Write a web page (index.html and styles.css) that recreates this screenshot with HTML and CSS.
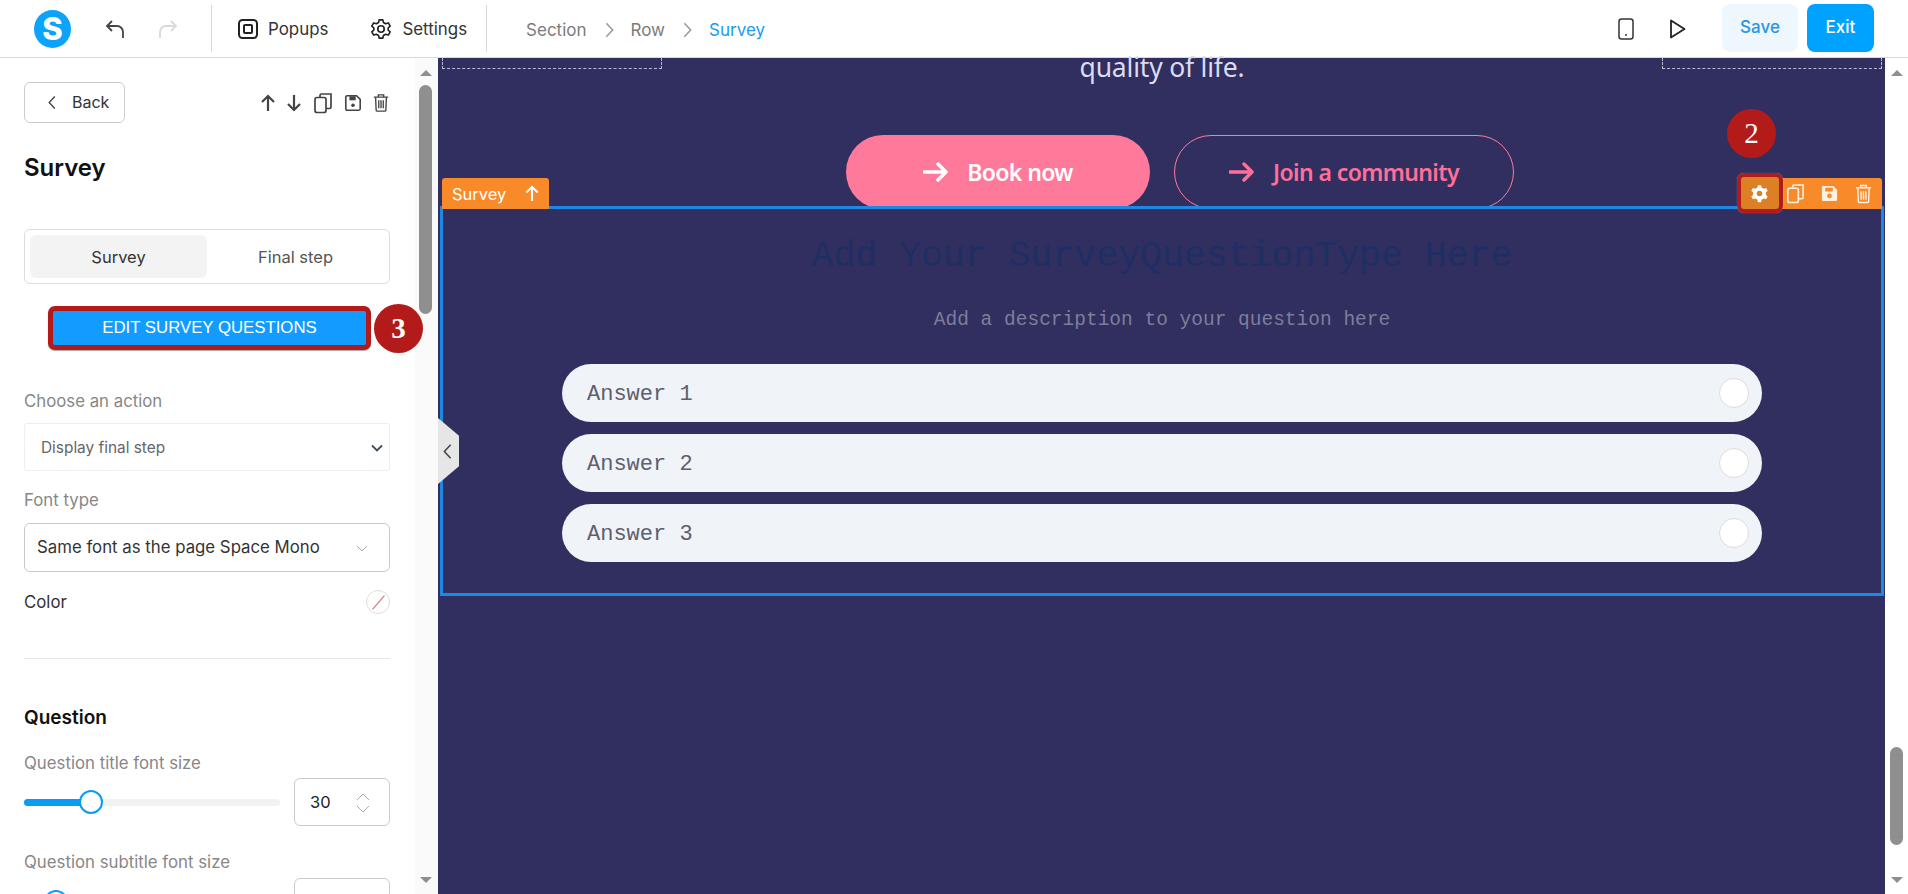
FILE: index.html
```html
<!DOCTYPE html>
<html lang="en">
<head>
<meta charset="utf-8">
<title>Survey editor</title>
<link rel="stylesheet" href="styles.css">
</head>
<body>
<svg class="defs" width="0" height="0" aria-hidden="true">
  <symbol id="i-copy" viewBox="0 0 20 22"><path d="M7 5V3.500A1.500 1.500 0 0 1 8.500 2H18v13a1.500 1.500 0 0 1-1.500 1.500H13" fill="none" stroke="currentColor" stroke-width="1.700"/><rect x="2" y="5.500" width="11" height="15" rx="2" fill="none" stroke="currentColor" stroke-width="1.700"/></symbol>
  <symbol id="i-save" viewBox="0 0 20 20"><path d="M3.500 2H14l4 4v10.500a1.500 1.500 0 0 1-1.500 1.500h-13A1.500 1.500 0 0 1 2 16.500v-13A1.500 1.500 0 0 1 3.500 2Z" fill="none" stroke="currentColor" stroke-width="1.800"/><path d="M6 2.500h7v4.500H6z" fill="currentColor"/><circle cx="10" cy="12.500" r="2" fill="currentColor"/></symbol>
  <symbol id="i-save-solid" viewBox="0 0 20 20"><path fill-rule="evenodd" d="M3.500 2H14l4 4v10.500a1.500 1.500 0 0 1-1.500 1.500h-13A1.500 1.500 0 0 1 2 16.500v-13A1.500 1.500 0 0 1 3.500 2ZM5.500 4v4h8V4ZM10 10a2.500 2.500 0 1 0 0 5 2.500 2.500 0 0 0 0-5Z" fill="currentColor"/></symbol>
  <symbol id="i-trash" viewBox="0 0 20 22"><path d="M2 5h16M7 5V2.500h6V5M4 5l.6 14.500a1 1 0 0 0 1 1h8.800a1 1 0 0 0 1-1L16 5M7.500 8.500v9M10 8.500v9M12.500 8.500v9" fill="none" stroke="currentColor" stroke-width="1.500"/></symbol>
  <symbol id="i-up" viewBox="0 0 16 18"><path d="M8 17V2M2 8l6-6 6 6" fill="none" stroke="currentColor" stroke-width="2.200"/></symbol>
  <symbol id="i-down" viewBox="0 0 16 18"><path d="M8 1v15M2 10l6 6 6-6" fill="none" stroke="currentColor" stroke-width="2.200"/></symbol>
  <symbol id="i-right" viewBox="0 0 26 20"><path d="M1 10h22M15 2l8 8-8 8" fill="none" stroke="currentColor" stroke-width="3.500" stroke-linecap="round" stroke-linejoin="round"/></symbol>
  <symbol id="i-chev" viewBox="0 0 10 18"><path d="M1.500 1.500 8.500 9l-7 7.500" fill="none" stroke="currentColor" stroke-width="1.700"/></symbol>
  <symbol id="i-gear" viewBox="0 0 24 24"><path fill="none" stroke="currentColor" stroke-width="1.800" stroke-linejoin="round" d="M10 2h4l.7 3 2.300 1.300 3-.9 2 3.400-2.200 2.100v2.200l2.200 2.100-2 3.400-3-.9-2.300 1.300-.7 3h-4l-.7-3L7 17.700l-3 .9-2-3.400 2.200-2.100v-2.200L2 8.800l2-3.400 3 .9L9.300 5Z"/><circle cx="12" cy="12" r="3.500" fill="none" stroke="currentColor" stroke-width="1.800"/></symbol>
</svg>

<div class="app">
  <header class="topbar">
    <div class="logo">S</div>
    <svg class="ic undo" viewBox="0 0 20 20"><path d="M7 2 2 7l5 5M2 7h10a6 6 0 0 1 6 6v6" fill="none" stroke="currentColor" stroke-width="1.800"/></svg>
    <svg class="ic redo" viewBox="0 0 20 20"><path d="m13 2 5 5-5 5M18 7H8a6 6 0 0 0-6 6v6" fill="none" stroke="currentColor" stroke-width="1.800"/></svg>
    <span class="vr first"></span>
    <svg class="ic popups" viewBox="0 0 20 20"><rect x="1" y="1" width="18" height="18" rx="3.500" fill="none" stroke="currentColor" stroke-width="2"/><rect x="6" y="6" width="8" height="8" rx="1" fill="none" stroke="currentColor" stroke-width="2"/></svg>
    <span class="tool-label">Popups</span>
    <svg class="ic settings"><use href="#i-gear"/></svg>
    <span class="tool-label">Settings</span>
    <span class="vr second"></span>
    <nav class="crumbs">
      <span>Section</span>
      <svg class="crumb-chev"><use href="#i-chev"/></svg>
      <span>Row</span>
      <svg class="crumb-chev"><use href="#i-chev"/></svg>
      <span class="crumb-on">Survey</span>
    </nav>
    <div class="top-right">
      <svg class="ic mobile" viewBox="0 0 16 22"><rect x="1" y="1" width="14" height="20" rx="2.500" fill="none" stroke="currentColor" stroke-width="1.500"/><circle cx="8" cy="17" r="1" fill="currentColor"/></svg>
      <svg class="ic play" viewBox="0 0 17 20"><path d="M2 1.500 15.500 10 2 18.500Z" fill="none" stroke="currentColor" stroke-width="1.800" stroke-linejoin="round"/></svg>
      <button class="btn btn-save">Save</button>
      <button class="btn btn-exit">Exit</button>
    </div>
  </header>

  <div class="workspace">
    <aside class="sidebar">
      <div class="panel">
        <div class="panel-head">
          <button class="back"><svg class="back-chev"><use href="#i-chev"/></svg>Back</button>
          <div class="panel-actions">
            <svg class="pa up"><use href="#i-up"/></svg>
            <svg class="pa down"><use href="#i-down"/></svg>
            <svg class="pa copy"><use href="#i-copy"/></svg>
            <svg class="pa save"><use href="#i-save"/></svg>
            <svg class="pa trash"><use href="#i-trash"/></svg>
          </div>
        </div>
        <h1 class="panel-title">Survey</h1>
        <div class="tabs">
          <span class="tab tab-on">Survey</span>
          <span class="tab">Final step</span>
        </div>
        <div class="edit-row">
          <button class="edit-btn">EDIT SURVEY QUESTIONS</button>
          <span class="step step-3">3</span>
        </div>
        <label class="field-label action-label">Choose an action</label>
        <div class="native-select">Display final step
          <svg class="sel-chev" viewBox="0 0 12 8"><path d="m1 1.500 5 5 5-5" fill="none" stroke="currentColor" stroke-width="1.800"/></svg>
        </div>
        <label class="field-label font-label">Font type</label>
        <div class="font-select">Same font as the page Space Mono
          <svg class="font-chev" viewBox="0 0 12 8"><path d="m1 1 5 5 5-5" fill="none" stroke="currentColor" stroke-width="1"/></svg>
        </div>
        <div class="color-row">
          <span>Color</span>
          <span class="swatch"><svg viewBox="0 0 24 24"><path d="M6 20 19 5" stroke="#d9808a" stroke-width="1.500"/></svg></span>
        </div>
        <hr class="rule">
        <h2 class="section-title">Question</h2>
        <label class="field-label title-size">Question title font size</label>
        <div class="slider-row">
          <div class="track"><span class="fill fill-a"></span><span class="knob"></span></div>
          <div class="num">30
            <svg class="spin" viewBox="0 0 14 20"><path d="m1 7 6-6 6 6M1 13l6 6 6-6" fill="none" stroke="currentColor" stroke-width="1"/></svg>
          </div>
        </div>
        <label class="field-label sub-size">Question subtitle font size</label>
        <div class="slider-row second-row">
          <div class="track"><span class="fill fill-b"></span><span class="knob"></span></div>
          <div class="num">
            <svg class="spin" viewBox="0 0 14 20"><path d="m1 7 6-6 6 6M1 13l6 6 6-6" fill="none" stroke="currentColor" stroke-width="1"/></svg>
          </div>
        </div>
      </div>
      <div class="side-scroll">
        <span class="arrow-up"></span>
        <span class="side-thumb"></span>
        <span class="arrow-down"></span>
      </div>
    </aside>

    <main class="canvas">
      <div class="collapse"><svg class="collapse-chev"><use href="#i-chev"/></svg></div>
      <div class="hero">
        <span class="dashed dashed-l"></span>
        <p class="hero-text">quality of life.</p>
        <span class="dashed dashed-r"></span>
      </div>
      <div class="cta-row">
        <a class="cta cta-solid"><svg class="cta-arrow"><use href="#i-right"/></svg>Book now</a>
        <a class="cta cta-line"><svg class="cta-arrow"><use href="#i-right"/></svg>Join a community</a>
      </div>
      <section class="survey">
        <div class="tag">Survey <svg class="tag-up"><use href="#i-up"/></svg></div>
        <div class="toolbar">
          <span class="tool tool-on"><svg class="tool-gear" viewBox="0 0 24 24"><path fill="currentColor" fill-rule="evenodd" d="M10 1.500h4l.7 3 2.600 1.500 3-.9 2 3.500-2.200 2.100v3l2.200 2.100-2 3.500-3-.9-2.600 1.500-.7 3h-4l-.7-3-2.600-1.500-3 .9-2-3.500 2.200-2.100v-3L1.700 8.600l2-3.500 3 .9L9.300 4.500ZM12 8.500a3.500 3.500 0 1 0 0 7 3.500 3.500 0 0 0 0-7Z"/></svg></span>
          <svg class="tool-ic"><use href="#i-copy"/></svg>
          <svg class="tool-ic"><use href="#i-save-solid"/></svg>
          <svg class="tool-ic"><use href="#i-trash"/></svg>
        </div>
        <span class="step step-2">2</span>
        <h2 class="q-title">Add Your SurveyQuestionType Here</h2>
        <p class="q-desc">Add a description to your question here</p>
        <ul class="answers">
          <li class="answer"><span class="answer-text">Answer 1</span><span class="radio"></span></li>
          <li class="answer"><span class="answer-text">Answer 2</span><span class="radio"></span></li>
          <li class="answer"><span class="answer-text">Answer 3</span><span class="radio"></span></li>
        </ul>
      </section>
    </main>

    <div class="page-scroll">
      <span class="arrow-up"></span>
      <span class="page-thumb"></span>
      <span class="arrow-down"></span>
    </div>
  </div>
</div>
</body>
</html>
```

FILE: styles.css
```css
* { box-sizing: border-box; }
html, body { margin: 0; height: 100%; overflow: hidden; }
body { font-family: Inter, "Liberation Sans", sans-serif; color: #333; background: #fff; }
.defs { position: absolute; }
.app { display: flex; flex-direction: column; height: 894px; width: 1908px; overflow: hidden; }

/* top bar */
.topbar { height: 58px; flex: none; display: flex; align-items: center; border-bottom: 1px solid #d9d9d9; background: #fff; }
.logo { width: 37px; height: 38px; margin-left: 34px; border-radius: 50%; background: #0ca3fb; color: #fff; font-weight: 800; font-size: 31px; line-height: 38px; text-align: center; }
.ic { display: block; flex: none; color: #333; }
.undo { width: 20px; height: 20px; margin-left: 34px; color: #444; }
.redo { width: 20px; height: 20px; margin-left: 33px; color: #d9d9d9; }
.vr { width: 1px; height: 47px; background: #d8d8d8; flex: none; }
.vr.first { margin-left: 33px; }
.vr.second { margin-left: 19px; }
.popups { width: 20px; height: 20px; margin-left: 26px; color: #222; }
.settings { width: 22px; height: 24px; margin-left: 42px; color: #222; }
.tool-label { font-size: 16.900px; margin-left: 10px; color: #333; }
.crumbs { display: flex; align-items: center; margin-left: 39px; margin-top: 2px; font-size: 17px; color: #7b7b7b; }
.crumb-chev { width: 9px; height: 18px; margin: 0 17px 0 18px; color: #9a9a9a; }
.crumb-on { color: #1a9bf0; }
.top-right { margin-left: auto; display: flex; align-items: center; padding-right: 34px; }
.mobile { width: 16px; height: 22px; margin-right: 35px; color: #333; }
.play { width: 17px; height: 20px; margin-right: 36px; color: #222; }
.btn { border: 0; border-radius: 8px; font: 500 17px Inter, sans-serif; height: 48px; padding: 0 0 3px; margin-top: -1px; }
.btn-save { width: 76px; background: #eef7fe; color: #2b94e6; margin-right: 9px; }
.btn-exit { width: 67px; background: #00a2ff; color: #fff; }

/* workspace */
.workspace { flex: 1; display: flex; min-height: 0; }
.sidebar { width: 438px; flex: none; display: flex; background: #fff; overflow: hidden; }
.panel { width: 415px; padding: 24px 25px 0 24px; flex: none; position: relative; z-index: 2; }

.panel-head { display: flex; justify-content: space-between; align-items: center; height: 41px; }
.back { display: flex; align-items: center; width: 101px; height: 41px; background: #fff; border: 1px solid #ccc; border-radius: 6px; font: 16px Inter, sans-serif; color: #333; padding: 0 0 2px 23px; }
.back-chev { width: 8px; height: 15px; transform: scaleX(-1); margin: 2px 16px 0 0; color: #444; }
.panel-actions { display: flex; align-items: center; color: #444; }
.pa { display: block; }
.pa.up, .pa.down { width: 16px; height: 18px; }
.pa.down { margin-left: 10px; }
.pa.copy { width: 20px; height: 22px; margin-left: 11px; }
.pa.save { width: 18px; height: 18px; margin-left: 11px; }
.pa.trash { width: 18px; height: 21px; margin-left: 10px; }

.panel-title { margin: 28px 0 0; font-size: 24px; line-height: 34px; font-weight: 600; color: #111; }
.tabs { display: flex; margin-top: 44px; height: 55px; padding: 5px; border: 1px solid #ddd; border-radius: 6px; font-size: 16.500px; }
.tab { flex: 1; display: flex; align-items: center; justify-content: center; color: #555; border-radius: 6px; }
.tab-on { background: #f3f3f3; color: #333; flex: 0 0 177px; }

.edit-row { display: flex; align-items: center; margin: 22px 0 0 24px; height: 44px; width: 400px; }
.edit-btn { width: 323px; height: 44px; flex: none; border: 5px solid #b31b1b; border-radius: 7px; background: #139cff; color: #fff; font: 16.800px "Liberation Sans", Arial, sans-serif; box-shadow: 0 1px 1px rgba(0,0,0,.35); padding: 0; }
.step { display: flex; align-items: center; justify-content: center; width: 49px; height: 49px; border-radius: 50%; background: #b31b1b; color: #fff; font-family: "Liberation Serif", serif; font-size: 29px; }
.step-3 { margin-left: 3px; flex: none; font-weight: 700; }
.step-2 { position: absolute; left: 1284px; top: -100px; z-index: 3; }

.field-label { display: block; font-size: 16.800px; line-height: 22px; color: #878787; }
.action-label { margin-top: 40px; }
.native-select { position: relative; height: 48px; margin-top: 11px; padding-left: 16px; line-height: 48px; font-size: 15.400px; color: #666; border: 1px solid #eee; border-radius: 3px; }
.sel-chev { position: absolute; right: 6px; top: 20px; width: 12px; height: 8px; color: #3c4a5c; }
.font-label { margin-top: 18px; }
.font-select { position: relative; height: 49px; margin-top: 12px; padding-left: 12px; line-height: 47px; font-size: 16.800px; color: #333; border: 1px solid #c9c9c9; border-radius: 6px; }
.font-chev { position: absolute; right: 21px; top: 21px; width: 12px; height: 8px; color: #aaa; }
.color-row { display: flex; justify-content: space-between; align-items: center; margin-top: 18px; height: 24px; font-size: 16.800px; color: #333; }
.swatch { display: block; width: 24px; height: 24px; border: 1px solid #ddd; border-radius: 50%; overflow: hidden; }
.swatch svg { display: block; width: 22px; height: 22px; }
.rule { margin: 44px 0 0; border: 0; border-top: 1px solid #e6e6e6; }
.section-title { margin: 47px 0 0; font-size: 19px; line-height: 24px; font-weight: 600; color: #111; }
.title-size { margin-top: 22px; }
.slider-row { display: flex; align-items: center; justify-content: space-between; margin-top: 4px; height: 48px; }
.track { position: relative; width: 256px; height: 7px; background: #f2f2f2; border-radius: 4px; }
.fill { position: absolute; left: 0; top: 0; bottom: 0; background: #0a9bf5; border-radius: 4px; }
.fill-a { width: 70px; }
.fill-b { width: 35px; }
.knob { position: absolute; top: -9px; width: 24px; height: 24px; background: #fff; border: 2px solid #0a9bf5; border-radius: 50%; }
.fill-a + .knob { left: 55px; }
.fill-b + .knob { left: 20px; }
.num { position: relative; width: 96px; height: 48px; line-height: 46px; padding-left: 15px; font-size: 16.500px; color: #222; border: 1px solid #ccc; border-radius: 6px; }
.spin { position: absolute; right: 19px; top: 14px; width: 14px; height: 20px; color: #aaa; }
.sub-size { margin-top: 25px; }
.second-row { margin-top: 5px; }

.side-scroll { flex: 1; background: #fafafa; position: relative; display: flex; flex-direction: column; align-items: center; }
.side-thumb { display: block; width: 13px; height: 229px; margin-top: 9px; background: #8f8f8f; border-radius: 7px; }
.arrow-up, .arrow-down { display: block; width: 0; height: 0; border-left: 6px solid transparent; border-right: 6px solid transparent; }
.arrow-up { border-bottom: 6px solid #8f8f8f; margin-top: 12px; }
.arrow-down { border-top: 6px solid #8f8f8f; margin-top: auto; margin-bottom: 11px; }
.side-thumb, .side-scroll .arrow-up, .side-scroll .arrow-down { margin-right: 2px; }

/* canvas */
.canvas { position: relative; flex: 0 0 1447px; background: #302f60; }
.hero { display: flex; align-items: flex-start; height: 77px; }
.dashed { display: block; height: 11px; border: 1px dashed #b9b9d2; border-top: 0; flex: none; }
.dashed-l { width: 220px; margin-left: 4px; }
.dashed-r { width: 220px; margin-right: 3px; }
.hero-text { flex: 1; margin: 0; text-align: center; font: 26.500px/18px "Noto Sans", "Open Sans", sans-serif; color: #dcdcf0; letter-spacing: -.2px; }

.cta-row { display: flex; gap: 24px; padding-left: 408px; height: 74px; }
.cta { display: flex; align-items: center; justify-content: center; flex: none; height: 74px; border-radius: 37px; font: 600 23px "Noto Sans", sans-serif; letter-spacing: -.6px; white-space: nowrap; }
.cta-solid { width: 304px; background: #ff7a9a; color: #fff; }
.cta-line { width: 340px; color: #ff6f97; border: 1px solid #ff7a9a; }
.cta-arrow { width: 26px; height: 20px; margin-right: 18px; flex: none; }

.survey { position: relative; margin: -3px 1px 0 2px; height: 390px; padding-top: 23px; background: #302f60; border: 3px solid #1e88e5; text-align: center; }
.tag { position: absolute; left: 0; top: -31px; display: flex; align-items: center; width: 107px; height: 31px; padding-left: 10px; margin-left: -1px; background: #f98a29; border-radius: 3px 3px 0 0; color: #fff; font-size: 16.500px; }
.tag-up { width: 16px; height: 17px; margin-left: 18px; }
.toolbar { position: absolute; right: -1px; top: -31px; display: flex; align-items: center; width: 140px; height: 31px; background: #f98a29; border-radius: 0 3px 0 0; color: #fff1e0; }
.tool-on { display: flex; align-items: center; justify-content: center; flex: none; width: 46px; height: 40px; margin: -3px 0 -2px -5px; padding-right: 2px; border: 4px solid #b01c1c; border-radius: 7px; background: #dd7f25; color: #fff; box-shadow: 0 0 1px rgba(255,255,255,.5); position: relative; }
.tool-gear { width: 19px; height: 19px; }
.tool-ic { width: 19px; height: 21px; margin-left: 15px; flex: none; }
.tool-ic:nth-child(2) { margin-left: 3px; }
.q-title { margin: 0; font: 400 36.500px/50px "Liberation Mono", monospace; color: #1f2e63; }
.q-desc { margin: 23px 0 0; font: 19.500px/30px "Liberation Mono", monospace; color: #7d7e9b; }
.answers { list-style: none; margin: 29px auto 0; padding: 0; width: 1200px; display: flex; flex-direction: column; gap: 12px; }
.answer { display: flex; align-items: center; justify-content: space-between; height: 58px; padding: 0 13px 0 25px; background: #f0f3f8; border-radius: 29px; font: 22px "Liberation Mono", monospace; color: #5c5f6e; }
.answer-text { padding-top: 2px; }
.radio { width: 30px; height: 30px; background: #fff; border: 1px solid #ddd; border-radius: 50%; }

.collapse { position: absolute; left: 0; top: 360px; z-index: 3; width: 21px; height: 66px; background: #e6e6e6; clip-path: polygon(0 0, 100% 27%, 100% 73%, 0 100%); display: flex; align-items: center; padding-left: 5px; }
.collapse-chev { width: 9px; height: 17px; transform: scaleX(-1); color: #444; }

.page-scroll { flex: 1; background: #fff; display: flex; flex-direction: column; align-items: center; }
.page-thumb { display: block; width: 13px; height: 98px; margin-top: 671px; background: #8f8f8f; border-radius: 7px; }
```
